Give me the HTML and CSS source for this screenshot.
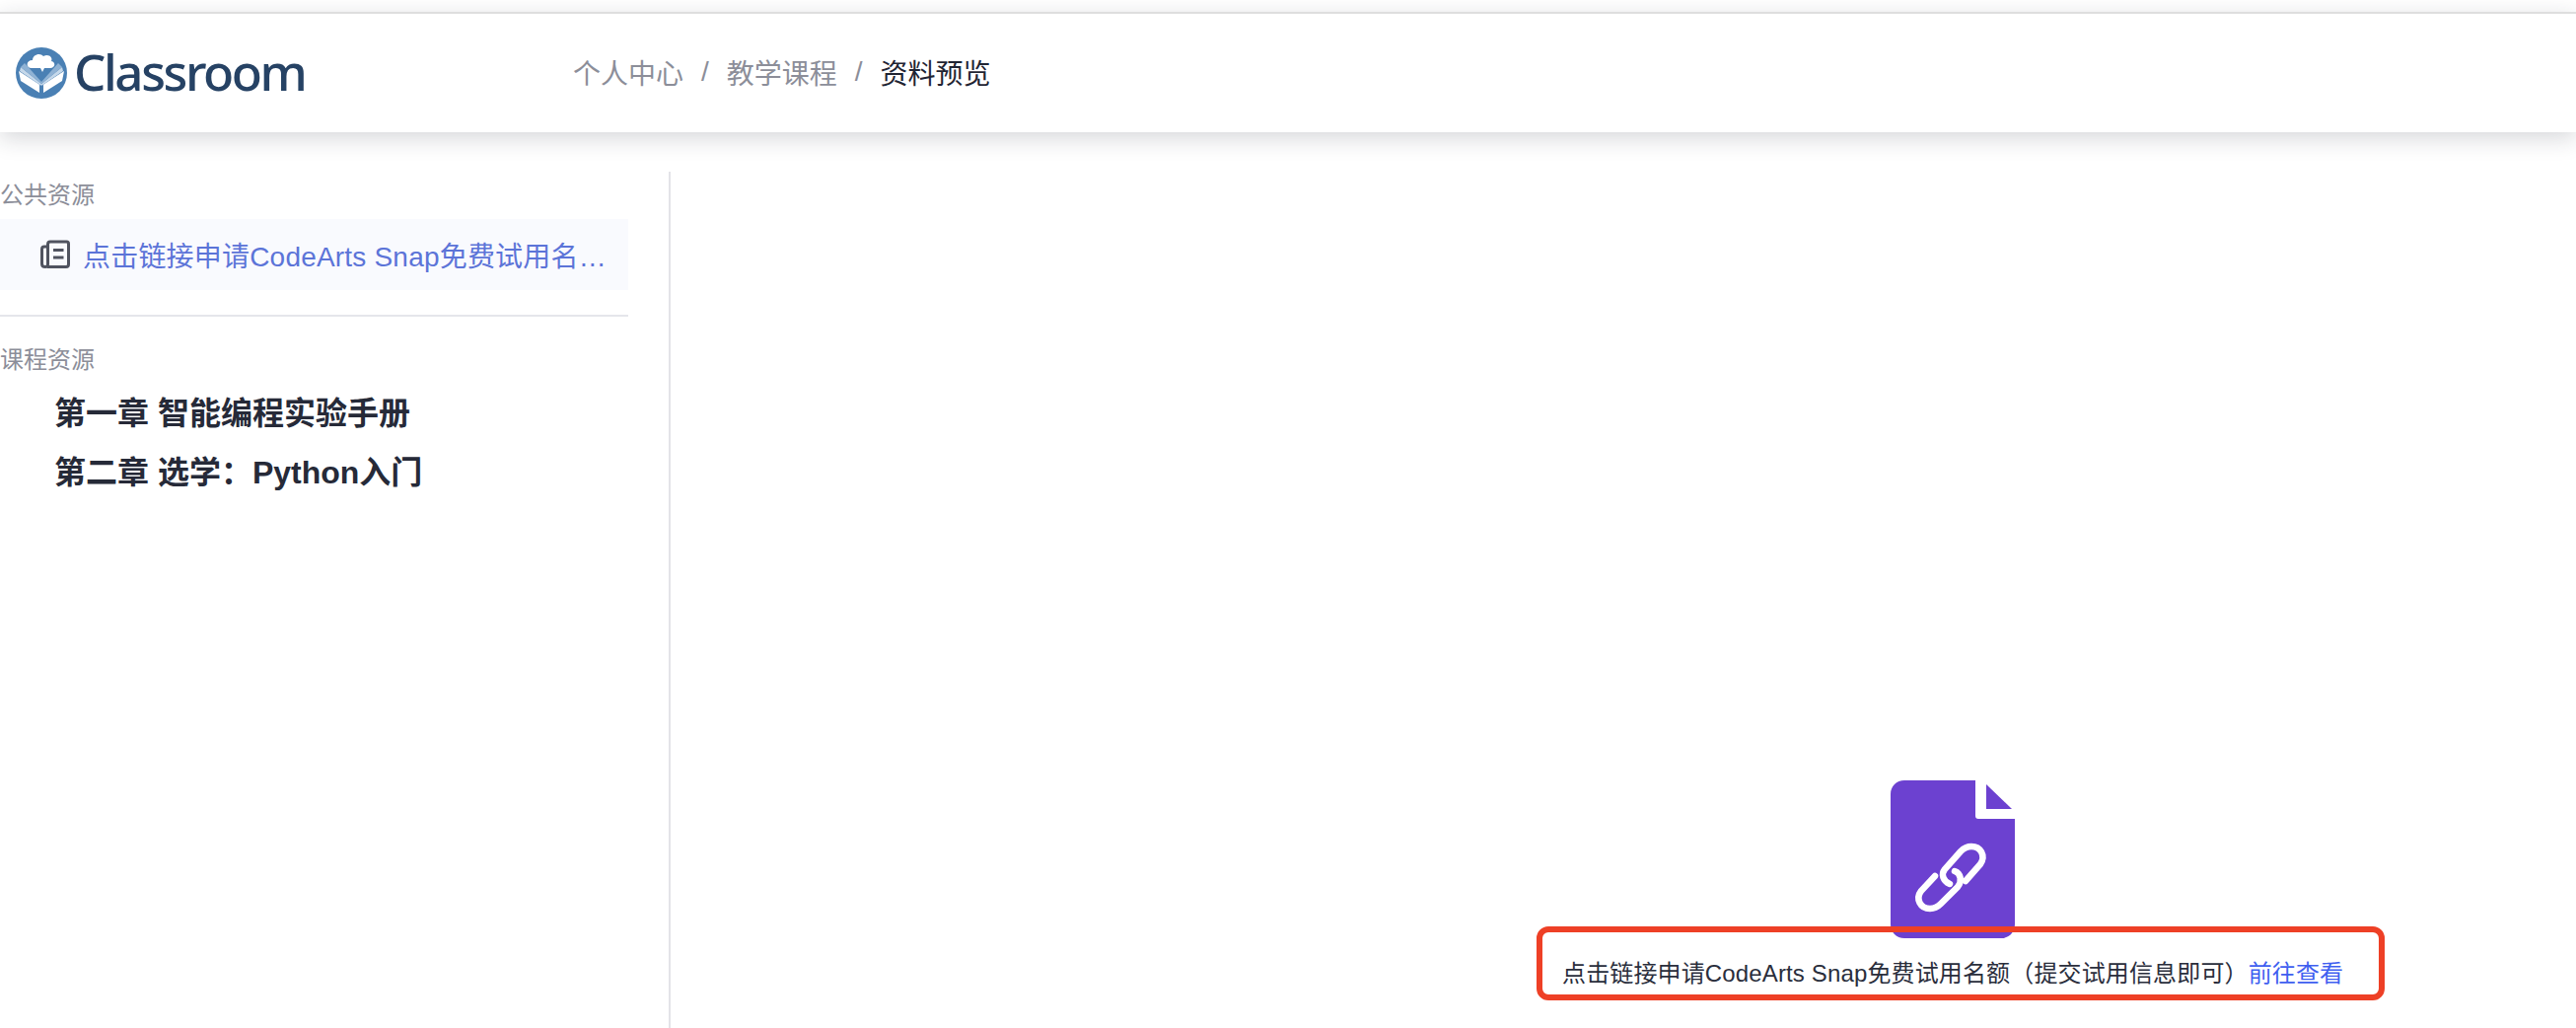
FILE: index.html
```html
<!DOCTYPE html>
<html lang="zh-CN">

<head>
    <meta charset="UTF-8">
    <meta name="viewport" content="width=device-width, initial-scale=1.0">
    <title>资料预览</title>
    <link rel="stylesheet" href="styles.css">
</head>

<body>

    <header class="topbar">
        <div class="logo">
            <svg class="logo-mark" viewBox="0 0 52 52" width="52" height="52">
                <circle cx="26" cy="26" r="26" fill="#4a80b4" />
                <path d="M3 24 L26 39 L49 24 L47 34 L28 46 L28 38 L24 38 L24 46 L5 34 Z" fill="#fff" />
                <path d="M5 20 L26 37 L47 20 L48 24 L26 39 L4 24 Z" fill="#c5d8ea" />
                <path d="M9 16 L26 35 L43 16 L47 20 L26 37 L5 20 Z" fill="#8fb2d4" />
                <path d="M26 38 L26 46" stroke="#4a80b4" stroke-width="1" />
                <path d="M16 21 C10 21 10 13 17 13 C17 7 25 5 28 9 C33 6 38 10 36 14 C41 15 40 21 35 21 L29 21 L27 25 L25 21 Z" fill="#fff" />
            </svg>
            <span class="logo-text">Classroom</span>
        </div>
        <nav class="crumbs">
            <a>个人中心</a>
            <span class="crumb-sep">/</span>
            <a>教学课程</a>
            <span class="crumb-sep">/</span>
            <span class="crumb-current">资料预览</span>
        </nav>
    </header>

    <div class="content">
        <aside class="sidebar">
            <div class="side-title">公共资源</div>
            <div class="res-item">
                <svg class="res-icon" viewBox="0 0 30 30" width="30" height="30" fill="none" stroke="#50535f" stroke-width="3">
                    <path d="M7 27.5 H26 C27.6 27.5 28.5 26.6 28.5 25 V4 C28.5 2.8 27.6 2 26.5 2 H10 C8.6 2 7.5 3 7.5 4.4 V25 C7.5 26.6 6.4 27.5 5 27.5 C3 27.5 1.5 26.4 1.5 24.5 V9.5 C1.5 8 2.6 7 4 7 H7.5" />
                    <path d="M13 10.5 H23.5 M13 18 H23.5" />
                </svg>
                <span class="res-name">点击链接申请CodeArts Snap免费试用名额（提交试用信息即可）</span>
            </div>
            <div class="side-title side-title-second">课程资源</div>
            <div class="chapter">第一章 智能编程实验手册</div>
            <div class="chapter">第二章 选学：Python入门</div>
        </aside>

        <main class="preview">
            <svg class="file-icon" viewBox="0 0 126 160" width="126" height="160">
                <path d="M14 0 H86 V36 C86 38 87 39 89 39 H126 V146 C126 154 120 160 112 160 H14 C6 160 0 154 0 146 V14 C0 6 6 0 14 0 Z" fill="#6c41d0" />
                <path d="M97 4 L123 29 H97 Z" fill="#6c41d0" />
                <g fill="none" stroke="#fff" stroke-width="6.5" stroke-linecap="round">
                    <path d="M76 102 L91 85 C97 76 91 67 82 67 C77 67 74 69 71 72 L55 90 C51 95 53 102 60 105" />
                    <path d="M45 97 L31 112 C25 120 30 130 40 130 C45 130 48 128 51 125 L68 108 C73 102 71 94 65 92" />
                </g>
            </svg>
            <p class="file-line">点击链接申请CodeArts Snap免费试用名额（提交试用信息即可）<a class="file-link">前往查看</a></p>
            <div class="red-mark"></div>
        </main>
    </div>

</body>

</html>
```

FILE: styles.css
```css
body {
    margin: 0;
    height: 1042px;
    overflow: hidden;
    background: #fff;
    font-family: "Liberation Sans", "Noto Sans CJK SC", sans-serif;
    color: #262a38;
}

.topbar {
    margin-top: 12px;
    height: 120px;
    border-top: 2px solid #dedede;
    display: flex;
    align-items: center;
    background: #fff;
    box-shadow: 0 6px 22px rgba(30, 35, 50, 0.18);
    position: relative;
}

.logo {
    display: flex;
    align-items: center;
    width: 581px;
    padding-left: 16px;
    box-sizing: border-box;
}

.logo-mark {
    flex: none;
}

.logo-text {
    margin: -5px 0 0 7px;
    font-family: "Noto Sans", sans-serif;
    font-size: 51px;
    font-weight: 500;
    line-height: 60px;
    letter-spacing: -2.4px;
    color: #264264;
}

.crumbs {
    display: flex;
    align-items: center;
    margin-top: -2px;
    font-size: 28px;
    color: #8c8e99;
}

.crumb-sep {
    margin: 0 18px;
}

.crumb-current {
    color: #1f2433;
}

.content {
    display: flex;
    height: 908px;
}

.sidebar {
    width: 680px;
    flex: none;
    box-sizing: border-box;
    margin-top: 40px;
    padding-right: 41px;
    border-right: 2px solid #e3e3e8;
}

.side-title {
    font-size: 24px;
    line-height: 48px;
    color: #8c8e99;
}

.res-item {
    display: flex;
    align-items: center;
    height: 72px;
    padding-left: 41px;
    padding-right: 20px;
    background: #f9fafe;
}

.res-icon {
    flex: none;
    margin-right: 13px;
}

.res-name {
    font-size: 28px;
    letter-spacing: 0.2px;
    color: #5c74d8;
    white-space: nowrap;
    overflow: hidden;
    text-overflow: ellipsis;
}

.side-title-second {
    margin-top: 25px;
    padding-top: 20px;
    border-top: 2px solid #e5e6eb;
}

.chapter {
    padding-left: 55px;
    font-size: 32px;
    font-weight: 700;
    line-height: 60px;
}

.preview {
    flex: 1;
    position: relative;
    display: flex;
    flex-direction: column;
    align-items: flex-start;
    padding: 657px 0 0 905px;
}

.file-icon {
    margin-left: 332px;
}

.file-line {
    margin: 18px 0 0 -1px;
    font-size: 24px;
    line-height: 36px;
    letter-spacing: 0.14px;
    white-space: nowrap;
    color: #2a2e3c;
}

.file-link {
    color: #3f5ff0;
}

.red-mark {
    position: absolute;
    left: 878px;
    top: 805px;
    width: 860px;
    height: 75px;
    box-sizing: border-box;
    border: 6px solid #ee4026;
    border-radius: 12px;
}
```
